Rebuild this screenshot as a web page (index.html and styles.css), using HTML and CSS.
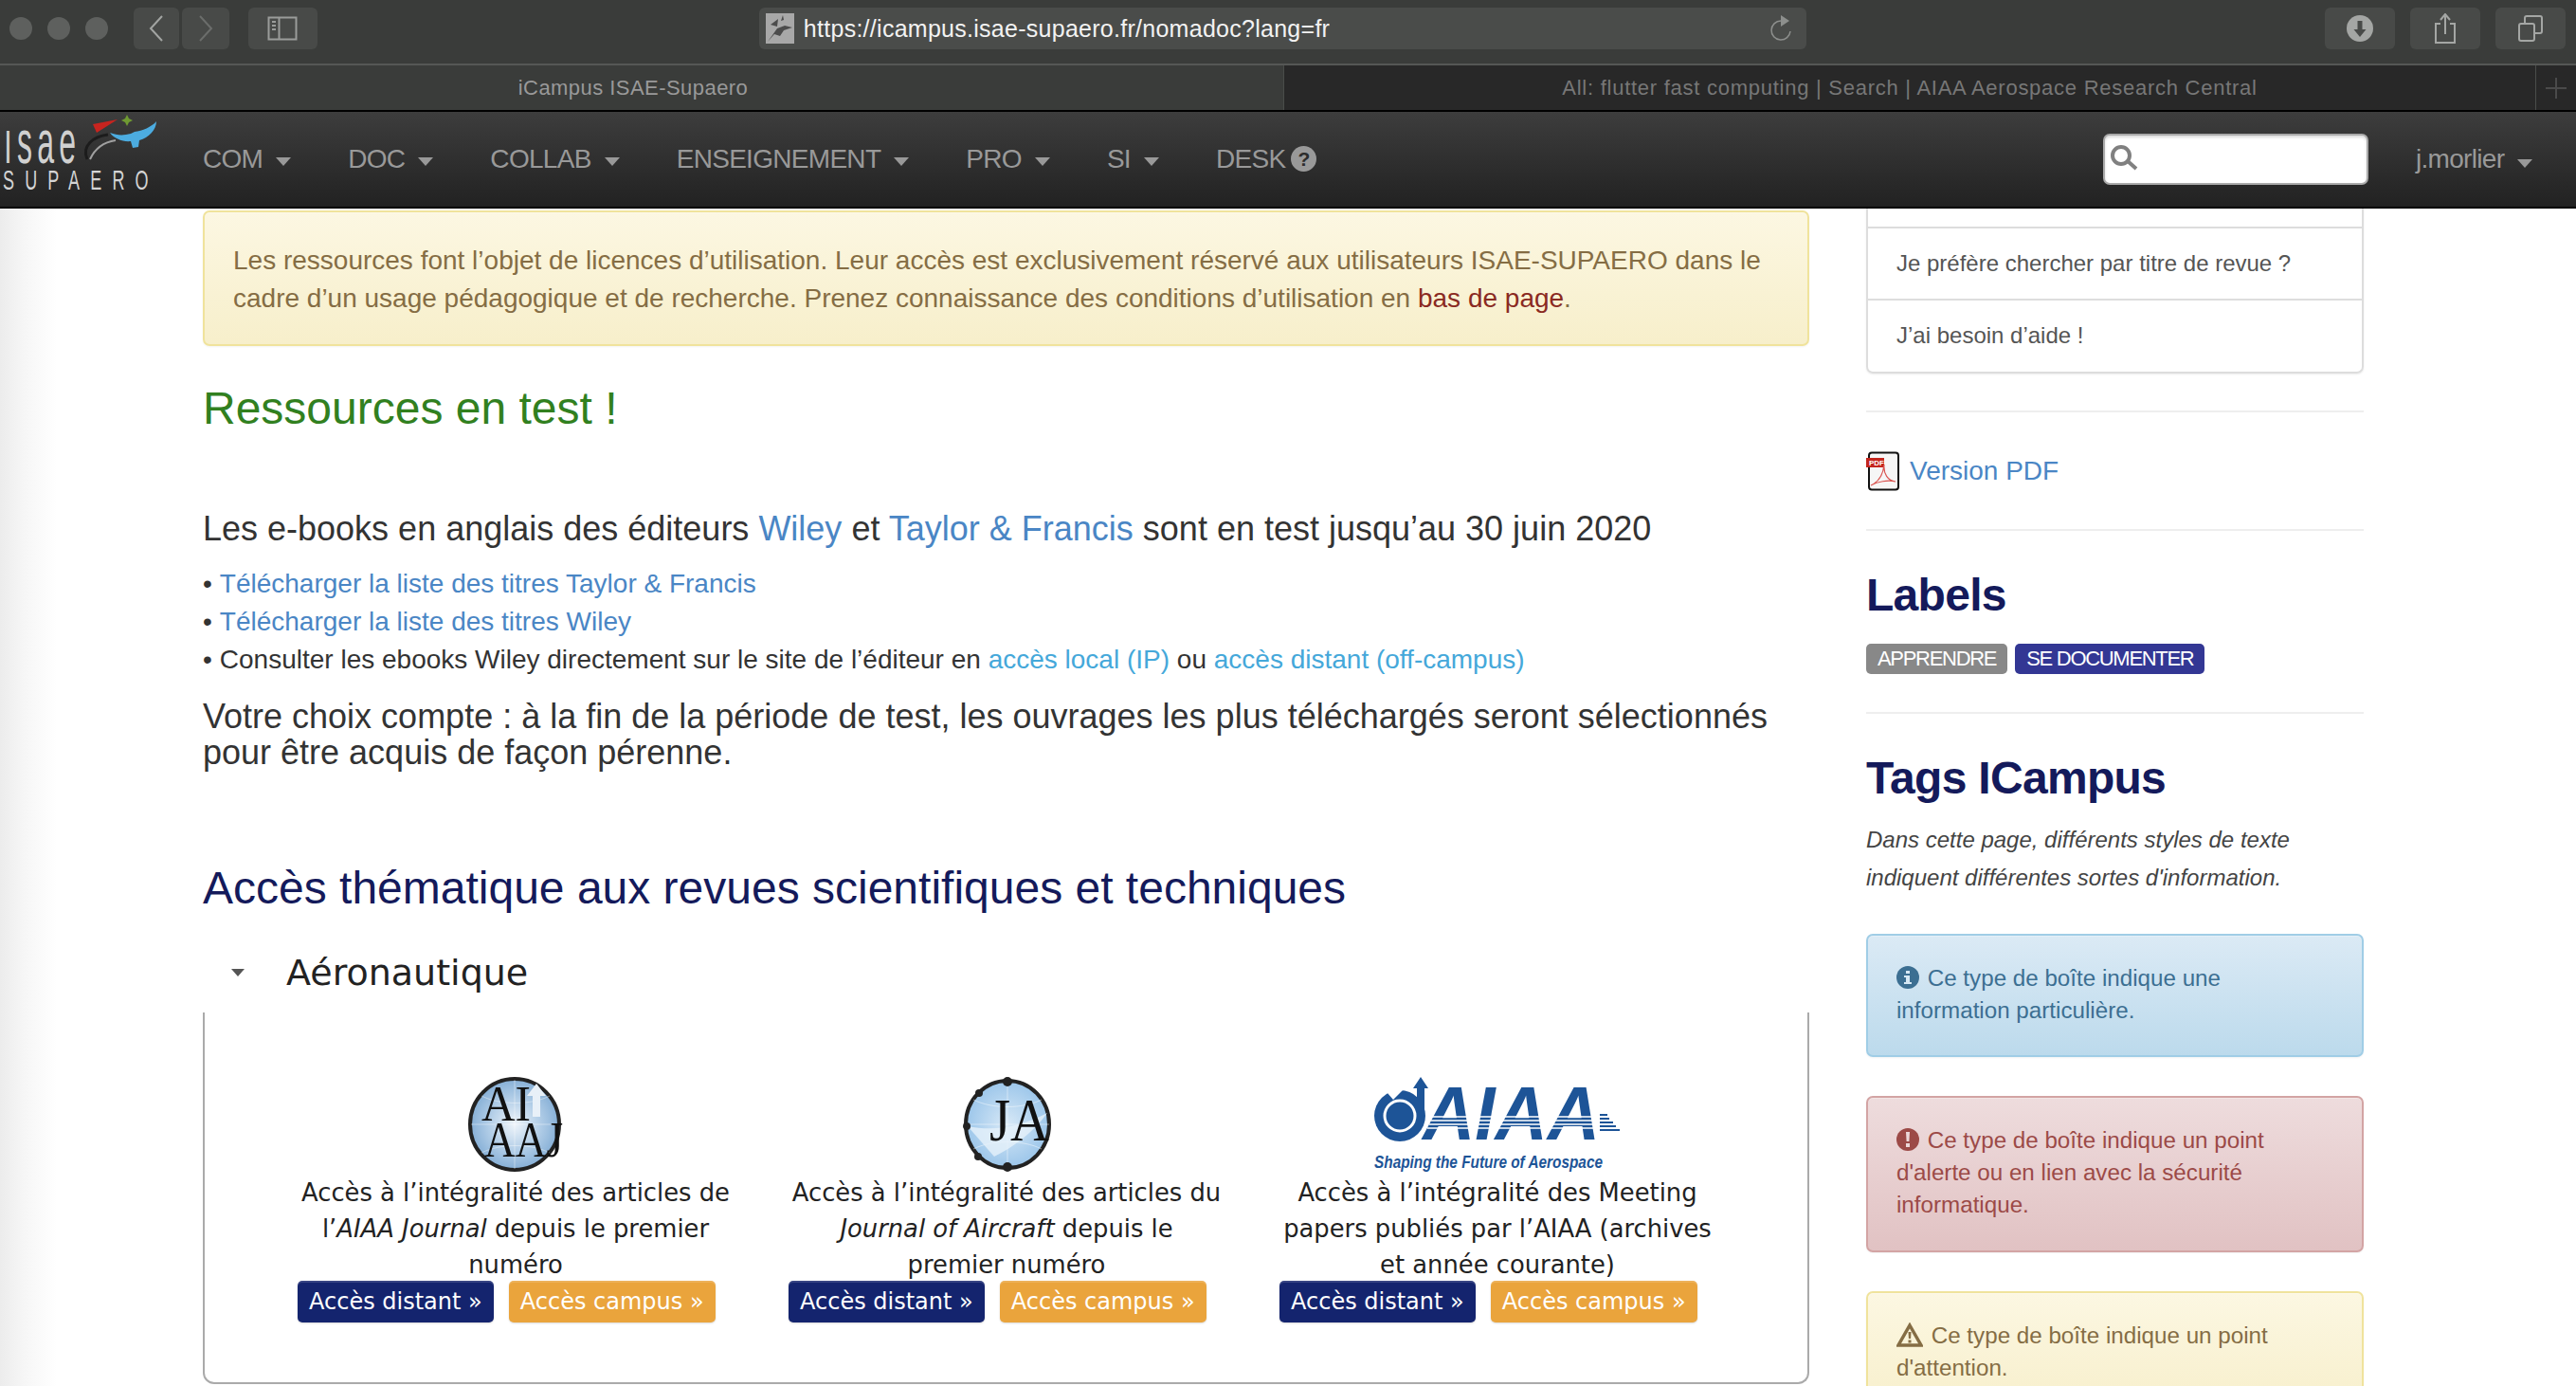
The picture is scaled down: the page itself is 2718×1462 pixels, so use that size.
FILE: index.html
```html
<!DOCTYPE html>
<html lang="fr">
<head>
<meta charset="utf-8">
<title>iCampus ISAE-Supaero</title>
<link rel="stylesheet" href="styles.css">
</head>
<body>
<header class="chrome">
  <div class="toolbar">
    <div class="lights"><i></i><i></i><i></i></div>
    <div class="tb-btn back"><svg width="20" height="30" viewBox="0 0 20 30"><path d="M16 2 4 15l12 13" fill="none" stroke="#a2a4a2" stroke-width="2"/></svg></div>
    <div class="tb-btn forward"><svg width="20" height="30" viewBox="0 0 20 30"><path d="M4 2l12 13L4 28" fill="none" stroke="#6b6d6b" stroke-width="2"/></svg></div>
    <div class="tb-btn sidebar-btn"><svg width="32" height="26" viewBox="0 0 32 26"><rect x="1.500" y="1.500" width="29" height="23" fill="none" stroke="#9a9c9a" stroke-width="2"/><path d="M12.500 2v22" stroke="#9a9c9a" stroke-width="2"/><path d="M5 6h4M5 10h4M5 14h4" stroke="#9a9c9a" stroke-width="2"/></svg></div>
    <div class="url">
      <svg class="fav" width="30" height="32" viewBox="0 0 30 32"><rect width="30" height="32" fill="#a8a8a8"/><path d="M2 30 12 16l8-3 8 2-9 3-4 6-6-2zM5 12l8-6-1 8zM18 2l1 5-3 1z" fill="#4c4c4c"/></svg>
      <span class="url-text">https://icampus.isae-supaero.fr/nomadoc?lang=fr</span>
      <svg class="reload" width="24" height="30" viewBox="0 0 24 30"><path d="M11 7a10 10 0 1 0 10 11" fill="none" stroke="#8d8f8d" stroke-width="1.500"/><path d="M11 1l9 6-9 6z" fill="#8d8f8d"/></svg>
    </div>
    <div class="tb-right">
      <div class="tb-btn tool"><svg width="28" height="28" viewBox="0 0 28 28"><circle cx="14" cy="14" r="14" fill="#a4a6a4"/><path d="M11.500 6h5v9h4L14 23l-6.500-8h4z" fill="#484a48"/></svg></div>
      <div class="tb-btn tool"><svg width="24" height="32" viewBox="0 0 24 32"><path d="M7 11H2v20h20V11h-5" fill="none" stroke="#a4a6a4" stroke-width="2"/><path d="M12 22V3M7 7l5-6 5 6" fill="none" stroke="#a4a6a4" stroke-width="2"/></svg></div>
      <div class="tb-btn tool"><svg width="26" height="28" viewBox="0 0 26 28"><rect x="1" y="9" width="16" height="18" rx="2" fill="none" stroke="#a4a6a4" stroke-width="2"/><path d="M7 8V3a2 2 0 0 1 2-2h14a2 2 0 0 1 2 2v14a2 2 0 0 1-2 2h-5" fill="none" stroke="#a4a6a4" stroke-width="2"/></svg></div>
    </div>
  </div>
  <div class="tabs">
    <div class="tab active">iCampus ISAE-Supaero</div>
    <div class="tab">All: flutter fast computing | Search | AIAA Aerospace Research Central</div>
    <div class="tab-new"><svg width="22" height="22" viewBox="0 0 22 22"><path d="M11 0v22M0 11h22" stroke="#4a4a4a" stroke-width="2"/></svg></div>
  </div>
  <nav class="nav">
    <svg class="logo" width="170" height="100" viewBox="0 0 170 100">
      <text transform="translate(4 54) scale(.5 1)" class="logo-isae" textLength="152" lengthAdjust="spacing">ısae</text>
      <text transform="translate(3 82) scale(.6 1)" class="logo-sup" textLength="256" lengthAdjust="spacing">SUPAERO</text>
      <path d="M92 50c-6-14 6-24 22-26" fill="none" stroke="#1c1c1c" stroke-width="3"/>
      <path d="M95 50c5-11 14-18 27-20" fill="none" stroke="#a0a0a0" stroke-width="2"/>
      <path d="M98 13l26-5-22 14z" fill="#c8241f"/>
      <path d="M134 3l2 4 4 2-4 2-2 4-2-4-4-2 4-2z" fill="#6f9a32"/>
      <path d="M116 22c8 3 14 3 22 1l4-2c8-1 18-5 23-11 0 9-8 17-18 20l-1 7-6 1-2-7c-8 1-18-3-22-9z" fill="#4cace0"/>
    </svg>
    <ul class="menu">
      <li>COM<b class="caret"></b></li>
      <li>DOC<b class="caret"></b></li>
      <li>COLLAB<b class="caret"></b></li>
      <li>ENSEIGNEMENT<b class="caret"></b></li>
      <li>PRO<b class="caret"></b></li>
      <li>SI<b class="caret"></b></li>
      <li>DESK<span class="help">?</span></li>
    </ul>
    <div class="search"><svg width="36" height="30" viewBox="0 0 36 30"><circle cx="13" cy="12" r="9" fill="none" stroke="#808080" stroke-width="4"/><path d="M20 18l9 8" stroke="#808080" stroke-width="4"/></svg></div>
    <div class="user">j.morlier<b class="caret"></b></div>
  </nav>
</header>

<div class="page">
  <main class="main">
    <div class="alert alert-warning lead-alert">Les ressources font l’objet de licences d’utilisation. Leur accès est exclusivement réservé aux utilisateurs ISAE-SUPAERO dans le cadre d’un usage pédagogique et de recherche. Prenez connaissance des conditions d’utilisation en <a class="dark-link">bas de page</a>.</div>
    <h2 class="green">Ressources en test !</h2>
    <p class="big">Les e-books en anglais des éditeurs <a>Wiley</a> et <a>Taylor &amp; Francis</a> sont en test jusqu’au 30 juin 2020</p>
    <ul class="bullets">
      <li><a>Télécharger la liste des titres Taylor &amp; Francis</a></li>
      <li><a>Télécharger la liste des titres Wiley</a></li>
      <li>Consulter les ebooks Wiley directement sur le site de l’éditeur en <a class="cyan">accès local (IP)</a> ou <a class="cyan">accès distant (off-campus)</a></li>
    </ul>
    <p class="big tight">Votre choix compte : à la fin de la période de test, les ouvrages les plus téléchargés seront sélectionnés pour être acquis de façon pérenne.</p>
    <h2 class="navy">Accès thématique aux revues scientifiques et techniques</h2>
    <div class="acc-head"><b class="caret dark"></b><span>Aéronautique</span></div>
    <section class="frame">
      <article class="card">
        <svg class="mark" width="100" height="100" viewBox="0 0 100 100">
          <defs><radialGradient id="g1"><stop offset="0" stop-color="#eef4fa"/><stop offset=".55" stop-color="#b4cfe8"/><stop offset="1" stop-color="#86afd6"/></radialGradient></defs>
          <ellipse cx="49" cy="50" rx="47" ry="48" fill="url(#g1)" stroke="#222" stroke-width="4"/>
          <path d="M49 3v94M3 50h92M14 20c20 10 52 10 72 0M14 80c20-10 52-10 72 0" fill="none" stroke="#fff" stroke-opacity=".4"/>
          <path d="M68 42V20l-6 0 10-13 10 13-6 0v22z" fill="#e8f0f8"/>
          <text x="14" y="46" class="serif-mark" textLength="52" lengthAdjust="spacingAndGlyphs">AI</text>
          <text x="17" y="84" class="serif-mark" textLength="83" lengthAdjust="spacingAndGlyphs">AAJ</text>
        </svg>
        <p>Accès à l’intégralité des articles de l’<em>AIAA Journal</em> depuis le premier numéro</p>
        <div class="btns"><a class="btn blue">Accès distant »</a><a class="btn orange">Accès campus »</a></div>
      </article>
      <article class="card">
        <svg class="mark" width="94" height="100" viewBox="0 0 94 100">
          <defs><radialGradient id="g2"><stop offset="0" stop-color="#d8e9f7"/><stop offset="1" stop-color="#9cc6ea"/></radialGradient></defs>
          <ellipse cx="48" cy="50" rx="44" ry="46" fill="url(#g2)" stroke="#222" stroke-width="4"/>
          <path d="M48 4v92M4 50h88M12 24c20 10 52 10 72 0M12 76c20-10 52-10 72 0" fill="none" stroke="#fff" stroke-opacity=".45"/>
          <path d="M6 52c30 6 56 0 84-14-16 22-36 36-56 46z" fill="#e6f1fa" opacity=".8"/>
          <circle cx="48" cy="5" r="5" fill="#222"/><circle cx="48" cy="95" r="5" fill="#222"/><circle cx="18" cy="17" r="4" fill="#222"/><circle cx="5" cy="52" r="4" fill="#222"/><circle cx="17" cy="84" r="4" fill="#222"/>
          <text x="29" y="67" class="serif-mark ja" textLength="63" lengthAdjust="spacingAndGlyphs">JA</text>
        </svg>
        <p>Accès à l’intégralité des articles du <em>Journal of Aircraft</em> depuis le premier numéro</p>
        <div class="btns"><a class="btn blue">Accès distant »</a><a class="btn orange">Accès campus »</a></div>
      </article>
      <article class="card">
        <svg class="mark" width="260" height="100" viewBox="0 0 260 100">
          <circle cx="27" cy="41" r="27" fill="#1d5497"/>
          <path d="M8 10 30 14 20 24z" fill="#fff"/>
          <circle cx="27" cy="41" r="16" fill="#1d5497" stroke="#fff" stroke-width="3"/>
          <path d="M49 0l8 12h-4v30h-8V12h-4z" fill="#1d5497"/>
          <text x="51" y="66" class="aiaa-mark" textLength="187" lengthAdjust="spacingAndGlyphs">AIAA</text>
          <path d="M60 42h180M60 46h180M58 50h182M56 54h186" stroke="#fff" stroke-width="1.500"/>
          <path d="M238 40h8M238 44h10M238 48h14M238 52h17M238 56h21" stroke="#1d5497" stroke-width="2"/>
          <text x="0" y="96" class="aiaa-tag" textLength="241" lengthAdjust="spacingAndGlyphs">Shaping the Future of Aerospace</text>
        </svg>
        <p>Accès à l’intégralité des Meeting papers publiés par l’AIAA (archives et année courante)</p>
        <div class="btns"><a class="btn blue">Accès distant »</a><a class="btn orange">Accès campus »</a></div>
      </article>
    </section>
  </main>

  <aside class="side">
    <ul class="side-list">
      <li class="cut"></li>
      <li>Je préfère chercher par titre de revue ?</li>
      <li>J’ai besoin d’aide !</li>
    </ul>
    <hr class="rule first">
    <div class="pdf">
      <svg width="36" height="42" viewBox="0 0 36 42"><rect x="3" y="1.500" width="31" height="39" rx="3" fill="#f6f6f6" stroke="#111" stroke-width="2"/><rect x="0" y="7" width="19" height="10" fill="#c4251d"/><text x="3" y="15" class="pdf-tag">PDF</text><path d="M19 14c-1 10-5 18-14 22 7-4 18-6 26-4-8-1-13-8-12-18z" fill="none" stroke="#d9534f" stroke-width="1.200"/></svg>
      <a>Version PDF</a>
    </div>
    <hr class="rule">
    <h3 class="side-h labels-h">Labels</h3>
    <div class="labels"><span class="label gray">APPRENDRE</span><span class="label indigo">SE DOCUMENTER</span></div>
    <hr class="rule third">
    <h3 class="side-h">Tags ICampus</h3>
    <p class="note">Dans cette page, différents styles de texte indiquent différentes sortes d'information.</p>
    <div class="alert box alert-info"><svg class="ic" width="24" height="26" viewBox="0 0 24 26"><circle cx="12" cy="13" r="12" fill="currentColor"/><path d="M10 6h4v3h-4zM8 11h6v7h2v2H8v-2h2v-5H8z" fill="#d6e8f4"/></svg> Ce type de boîte indique une information particulière.</div>
    <div class="alert box alert-danger"><svg class="ic" width="24" height="26" viewBox="0 0 24 26"><circle cx="12" cy="13" r="12" fill="currentColor"/><path d="M10 5h4l-.6 10h-2.800zM10 17h4v4h-4z" fill="#ecd8d9"/></svg> Ce type de boîte indique un point d'alerte ou en lien avec la sécurité informatique.</div>
    <div class="alert box alert-warning"><svg class="ic tri" width="28" height="26" viewBox="0 0 28 26"><path d="M14 3 26 24H2z" fill="none" stroke="currentColor" stroke-width="3.500"/><path d="M12.500 10h3l-.4 7h-2.200zM12.500 18.500h3v3h-3z" fill="currentColor"/></svg> Ce type de boîte indique un point d'attention.</div>
  </aside>
</div>
</body>
</html>
```
FILE: styles.css
```css
* { box-sizing: border-box; }
html, body { margin: 0; padding: 0; }
body {
  width: 2718px;
  height: 1462px;
  overflow: hidden;
  background: linear-gradient(90deg, #ececec 0, #f6f6f6 25px, #fff 60px);
  font-family: "Liberation Sans", Arial, sans-serif;
  font-size: 28px;
  color: #333;
}
a { color: #4a86c5; text-decoration: none; }

/* browser chrome */
.chrome { height: 220px; background: #000; }
.toolbar {
  height: 67px;
  padding: 8px 11px 0 10px;
  display: flex;
  background: #3a3c3a;
}
.lights { display: flex; gap: 16px; margin: 10px 27px 0 0; }
.lights i { width: 24px; height: 24px; border-radius: 50%; background: #5e605e; }
.tb-btn {
  height: 44px;
  border-radius: 6px;
  background: #484a48;
  display: flex;
  align-items: center;
  justify-content: center;
}
.back { width: 48px; margin-right: 3px; }
.forward { width: 50px; margin-right: 20px; }
.sidebar-btn { width: 73px; margin-right: 466px; }
.url {
  width: 1106px;
  height: 44px;
  border-radius: 6px;
  background: #4a4c4a;
  display: flex;
  align-items: center;
  padding: 0 14px 0 7px;
}
.fav { flex: none; margin-right: 10px; }
.url-text { flex: 1; font-size: 25px; color: #f2f2f2; letter-spacing: .27px; }
.tb-right { display: flex; gap: 16px; margin-left: 547px; }
.tool { width: 74px; }
.tabs { height: 50px; display: flex; border-top: 2px solid #555755; border-bottom: 1px solid #000; background: #282828; }
.tab {
  height: 47px;
  width: 1321px;
  display: flex;
  align-items: center;
  justify-content: center;
  background: #282828;
  border-left: 1px solid #4a4c4a;
  font-size: 22px;
  letter-spacing: .74px;
  color: #777;
}
.tab.active { width: 1354px; padding-right: 18px; border-left: 0; background: #3a3c3a; color: #999; letter-spacing: .45px; }
.tab-new { flex: 1; display: flex; align-items: center; justify-content: center; border-left: 1px solid #4a4c4a; }
.nav {
  height: 100px;
  margin-top: 1px;
  display: flex;
  align-items: center;
  background: linear-gradient(#3d3d3d, #222);
  color: #999;
  letter-spacing: -.7px;
}
.logo { flex: none; margin-right: 44px; align-self: flex-start; letter-spacing: 0; }
.logo-isae { font-size: 64px; fill: #d0d0d0; }
.logo-sup { font-size: 30px; fill: #d4d4d4; }
.menu { list-style: none; display: flex; gap: 60px; margin: 0; padding: 0; flex: 1; }
.menu li { display: flex; align-items: center; height: 40px; }
.caret {
  display: inline-block;
  width: 0;
  height: 0;
  margin-left: 14px;
  margin-top: 4px;
  border-left: 8px solid transparent;
  border-right: 8px solid transparent;
  border-top: 9px solid #999;
}
.help {
  width: 27px;
  height: 27px;
  margin: -2px 0 0 6px;
  border-radius: 50%;
  background: #999;
  color: #2c2c2c;
  font-size: 21px;
  font-weight: bold;
  line-height: 27px;
  text-align: center;
  letter-spacing: 0;
}
.search {
  width: 280px;
  height: 54px;
  margin-right: 50px;
  padding: 9px 0 0 4px;
  background: #fff;
  border: 2px solid #aaa;
  border-radius: 7px;
  box-shadow: inset 0 2px 3px rgba(0,0,0,.15);
}
.user { width: 169px; }

/* page */
.page {
  height: 1242px;
  overflow: hidden;
  display: flex;
  align-items: flex-start;
  padding-left: 214px;
}
.main { width: 1695px; flex: none; padding-top: 2px; }
.side { width: 525px; flex: none; margin-left: 60px; }
.alert {
  border: 2px solid #f0e39c;
  border-radius: 7px;
  box-shadow: inset 0 1px 0 rgba(255,255,255,.25), 0 1px 2px rgba(0,0,0,.05);
}
.alert-warning { background: linear-gradient(#fcf7e2, #f7efcb); color: #856d44; }
.alert-info { background: linear-gradient(#dbeaf5, #bcdaec); border-color: #a0cde6; color: #3c6f92; }
.alert-danger { background: linear-gradient(#eedcdd, #e1c2c3); border-color: #d3a4a4; color: #9c4a47; }
.lead-alert { height: 143px; padding: 31px 30px 0; line-height: 40px; font-size: 28px; }
.dark-link { color: #8a2a22; }
.green { margin: 41px 0 0; font-weight: normal; font-size: 48px; line-height: 50px; color: #31801f; }
.big { margin: 82px 0 0; font-size: 36px; line-height: 40px; color: #333; }
.bullets { list-style: none; margin: 18px 0 0; padding: 0; line-height: 40px; font-size: 28px; }
.bullets li::before { content: "•"; margin-right: 8px; }
.cyan { color: #45a8da; }
.big.tight { margin-top: 21px; line-height: 38px; }
.navy { margin: 94px 0 0; font-weight: normal; font-size: 48px; line-height: 60px; color: #141a5b; }
.acc-head { display: flex; align-items: center; height: 60px; margin-top: 29px; padding-left: 30px; }
.caret.dark { margin: 0 44px 0 0; border-top-color: #555; border-left-width: 7px; border-right-width: 7px; border-top-width: 8px; }
.acc-head span { font-family: "DejaVu Sans", sans-serif; font-size: 38px; color: #222; }
.frame {
  height: 392px;
  margin-top: 12px;
  padding: 68px 0 0 98px;
  display: flex;
  align-items: flex-start;
  border: 2px solid #aaa;
  border-top: 0;
  border-radius: 0 0 12px 12px;
}
.card { width: 518px; flex: none; padding-right: 58px; font-family: "DejaVu Sans", sans-serif; font-size: 25.800px; color: #222; text-align: center; }
.mark { display: block; margin: 0 auto; }
.card p { margin: 3px 0 0; line-height: 38px; }
.btns { display: flex; gap: 16px; margin-top: -2px; }
.btn {
  height: 44px;
  padding: 0 12px;
  display: flex;
  align-items: center;
  border-radius: 5px;
  color: #fff;
  font-size: 24px;
  box-shadow: inset 0 2px 0 rgba(255,255,255,.15), 0 1px 2px rgba(0,0,0,.15);
  white-space: nowrap;
}
.btn.blue { background: #14246e; }
.btn.orange { background: #eaa43c; }
.serif-mark { font-family: "Liberation Serif", serif; font-size: 53px; fill: #111; }
.serif-mark.ja { font-size: 63px; }
.aiaa-mark { font-family: "Liberation Sans", sans-serif; font-style: italic; font-weight: bold; font-size: 80px; fill: #1d5497; }
.aiaa-tag { font-family: "Liberation Sans", sans-serif; font-style: italic; font-weight: bold; font-size: 18px; fill: #1d5497; }

/* sidebar */
.side-list { list-style: none; margin: 0; padding: 0; border: 2px solid #ddd; border-top: 0; border-radius: 0 0 7px 7px; box-shadow: 0 1px 2px rgba(0,0,0,.08); font-size: 24px; color: #555; }
.side-list li { height: 76px; padding: 0 30px; line-height: 74px; border-bottom: 2px solid #ddd; }
.side-list li:last-child { height: 75px; border-bottom: 0; }
.side-list .cut { height: 21px; }
hr.rule { height: 2px; margin: 0; border: 0; background: #eee; }
hr.first { margin-top: 39px; }
.pdf { display: flex; align-items: center; gap: 10px; height: 42px; margin-top: 41px; margin-bottom: 40px; font-size: 28px; }
.pdf svg { flex: none; }
.pdf-tag { font-size: 8px; font-weight: bold; fill: #fff; }
.side-h { margin: 40px 0 0; font-size: 48px; line-height: 56px; font-weight: bold; color: #141a5b; letter-spacing: -.7px; }
.labels-h { margin-top: 40px; }
.labels { display: flex; gap: 8px; margin-top: 23px; }
.label { height: 32px; padding: 0 12px; border-radius: 5px; color: #fff; font-size: 22px; line-height: 32px; letter-spacing: -1.300px; }
.gray { background: #888; }
.indigo { background: #333794; }
hr.third { margin-top: 40px; }
.note { margin: 17px 0 0; font-size: 24px; line-height: 40px; font-style: italic; color: #444; }
.box { padding: 28px 30px 0; font-size: 24.200px; line-height: 34px; margin-bottom: 41px; }
.box.alert-info { height: 130px; margin-top: 39px; }
.box.alert-danger { height: 165px; }
.box.alert-warning { height: 130px; }
.ic { vertical-align: -4px; margin-right: 2px; }
```
